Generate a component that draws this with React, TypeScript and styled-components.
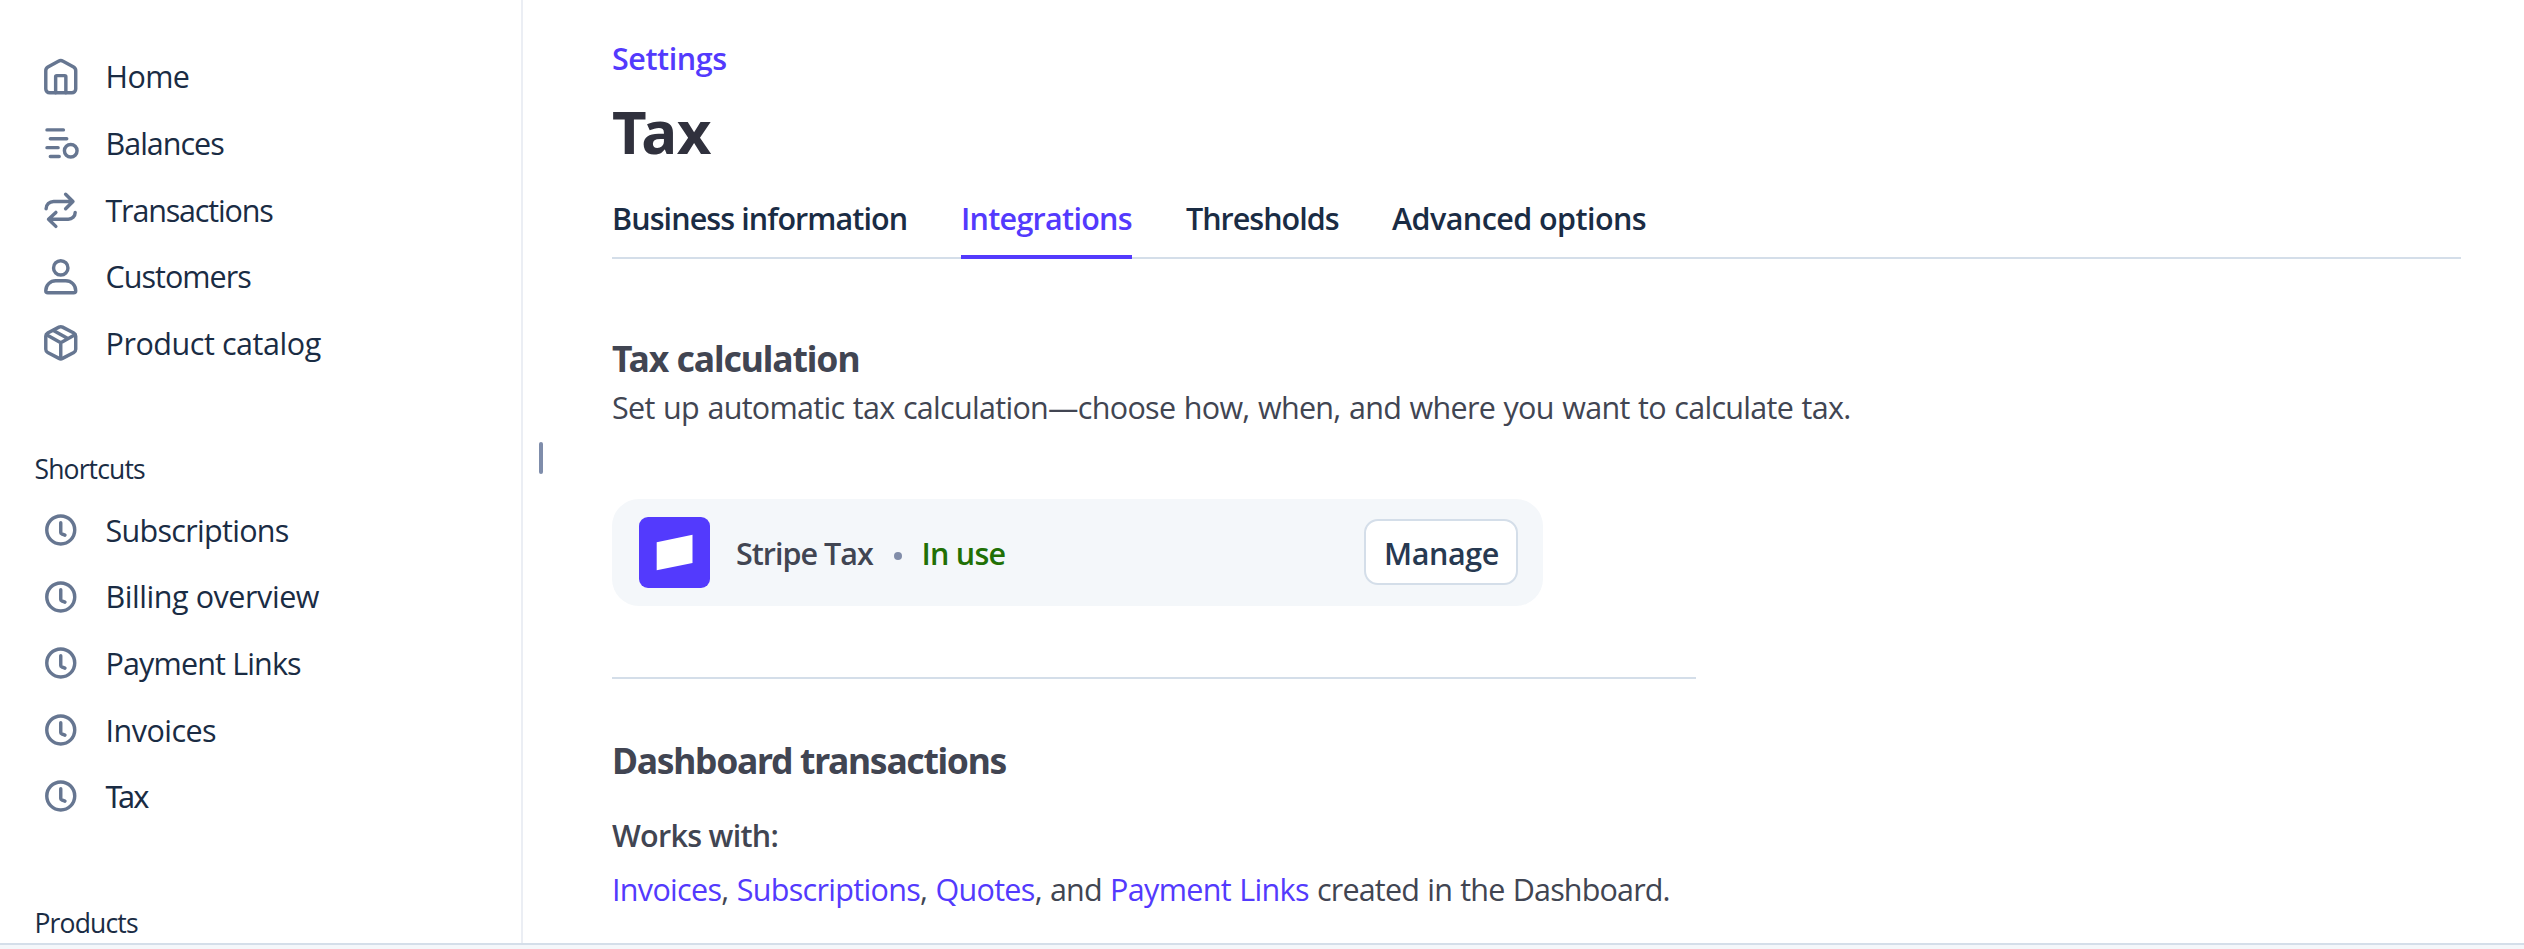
import React from "react";
import styled, { createGlobalStyle } from "styled-components";

const GlobalStyle = createGlobalStyle`
  * { box-sizing: border-box; }
  body {
    margin: 0;
    background: #fff;
    font-family: "Open Sans", "Noto Sans", sans-serif;
    font-size: 30.5px;
    color: #414552;
    overflow: hidden;
  }
`;

const Page = styled.div`
  display: flex;
  flex-direction: column;
  height: 949px;
  overflow: hidden;
`;

const Columns = styled.div`
  display: flex;
  height: 943px;
  overflow: hidden;
`;

const BottomBar = styled.footer`
  height: 6px;
  flex: none;
  background: #f4f7fa;
  border-top: 2px solid #d4dee9;
`;

const Sidebar = styled.aside`
  flex: none;
  width: 523px;
  padding-top: 43px;
  border-right: 2px solid #ebeef4;
  overflow: hidden;
`;

const NavGroup = styled.nav`
  display: flex;
  flex-direction: column;
`;

const NavItem = styled.a<{ $ls: number; $noto?: boolean }>`
  display: flex;
  align-items: center;
  gap: 27px;
  height: 66.67px;
  padding-left: 43px;
  color: #1a2c44;
  letter-spacing: ${(p) => p.$ls}px;
  font-family: ${(p) => (p.$noto ? '"Noto Sans"' : '"Open Sans"')}, sans-serif;
  white-space: nowrap;
`;

const NavIcon = styled.svg`
  flex: none;
  width: 35.5px;
  height: 35.5px;
  fill: none;
  stroke: #667691;
  stroke-width: 1.55;
  stroke-linecap: round;
  stroke-linejoin: round;
  overflow: visible;
`;

const NavHeading = styled.h2<{ $ls: number }>`
  margin: 75px 0 9px;
  padding-left: 34.5px;
  font-size: 26.5px;
  font-weight: 400;
  line-height: 36px;
  letter-spacing: ${(p) => p.$ls}px;
  color: #1a2c44;
`;

const ResizeHandle = styled.div`
  flex: none;
  align-self: flex-start;
  width: 4px;
  height: 32px;
  margin: 442px 0 0 16px;
  border-radius: 2px;
  background: #7f8dab;
`;

const Main = styled.main`
  flex: 1;
  padding: 38px 63px 0 69px;
`;

const Breadcrumb = styled.a`
  display: block;
  font-weight: 600;
  line-height: 40px;
  letter-spacing: -0.43px;
  color: #533afd;
`;

const Title = styled.h1`
  margin: 17px 0 31px;
  font-family: "Noto Sans", sans-serif;
  font-size: 60px;
  font-weight: 700;
  line-height: 72px;
  letter-spacing: -0.5px;
  color: #30313d;
`;

const Tabs = styled.div`
  display: flex;
  gap: 54px;
  height: 61px;
  border-bottom: 2px solid #d4dee9;
`;

const Tab = styled.a<{ $w: number; $ls: number; $active?: boolean }>`
  width: ${(p) => p.$w}px;
  height: 61px;
  font-weight: 600;
  line-height: 40px;
  white-space: nowrap;
  letter-spacing: ${(p) => p.$ls}px;
  color: ${(p) => (p.$active ? "#533afd" : "#1a2c44")};
  border-bottom: 4px solid ${(p) => (p.$active ? "#533afd" : "transparent")};
`;

const SectionTitle = styled.h2<{ $ls: number; $first?: boolean }>`
  margin: ${(p) => (p.$first ? 77 : 59)}px 0 0;
  font-family: "Noto Sans", sans-serif;
  font-size: 35.5px;
  font-weight: 700;
  line-height: 44px;
  letter-spacing: ${(p) => p.$ls}px;
`;

const Description = styled.p`
  margin: 7px 0 0;
  line-height: 40px;
  letter-spacing: -0.7px;
  word-spacing: 1.2px;
  white-space: nowrap;
`;

const Card = styled.div`
  display: flex;
  align-items: center;
  width: 931px;
  height: 107px;
  margin-top: 72px;
  padding: 0 25px 0 27px;
  border-radius: 27px;
  background: #f4f7fa;
  font-weight: 600;
`;

const AppTile = styled.svg`
  flex: none;
  width: 71px;
  height: 71px;
  margin-right: 26px;
`;

const AppName = styled.span`
  width: 137px;
  line-height: 40px;
  letter-spacing: -1px;
  white-space: nowrap;
`;

const Dot = styled.span`
  width: 8px;
  height: 8px;
  margin: 7px 20px 0 20.5px;
  border-radius: 50%;
  background: #818da9;
`;

const Status = styled.span`
  line-height: 40px;
  letter-spacing: -0.75px;
  color: #217005;
`;

const ManageButton = styled.button`
  width: 154px;
  height: 66px;
  margin: 0 0 1px auto;
  padding: 2px 0 0 1px;
  border: 2px solid #d4dee9;
  border-radius: 14px;
  background: #fff;
  font: inherit;
  line-height: 40px;
  letter-spacing: -0.4px;
  color: #273951;
`;

const Rule = styled.hr`
  width: 1084px;
  height: 2px;
  margin: 71px 0 0;
  border: 0;
  background: #d4dee9;
`;

const WorksWith = styled.h3`
  margin: 33px 0 14px;
  font-size: inherit;
  font-weight: 600;
  line-height: 40px;
  letter-spacing: -0.72px;
`;

const Products = styled.p`
  margin: 0;
  line-height: 40px;
  letter-spacing: -0.84px;
  word-spacing: 1.2px;
  white-space: nowrap;
`;

const Link = styled.a`
  letter-spacing: -0.68px;
  color: #533afd;
`;

const icons = {
  home: (
    <>
      <path d="M1.25 5.3c0-.7.35-1.3.95-1.65L6.95.98c.65-.35 1.45-.35 2.1 0l4.75 2.67c.6.35.95.95.95 1.65v8.2c0 .97-.78 1.75-1.75 1.75H3c-.97 0-1.75-.78-1.75-1.75z" />
      <path d="M5.7 15.2V8c0-.3.2-.5.5-.5h3.6c.3 0 .5.2.5.5v7.2" />
    </>
  ),
  balances: (
    <>
      <path d="M1.8 2.2h7.4M3.3 6.2h7.4M1.8 10.2h5M3.3 14.2h4" />
      <circle cx="12.5" cy="11.6" r="2.85" />
    </>
  ),
  transactions: (
    <>
      <path d="M1.4 7.6c0-1.9 1.5-3.35 3.4-3.35h8.7M10.2 1l3.3 3.25-3.3 3.3" />
      <path d="M14.5 9.2c0 1.7-1.4 3.05-3.1 3.05H2.5M5.8 9.2l-3.3 3.05L5.8 15.5" />
    </>
  ),
  customers: (
    <>
      <circle cx="8" cy="4" r="3.25" />
      <path d="M1.25 14.3c0-2.5 2-4.5 4.5-4.5h4.5c2.5 0 4.5 2 4.5 4.5 0 .55-.4.95-.95.95H2.2c-.55 0-.95-.4-.95-.95z" />
    </>
  ),
  catalog: (
    <>
      <path d="M7.2.95c.5-.25 1.1-.25 1.6 0l5.1 2.7c.55.3.85.8.85 1.4v5.9c0 .6-.3 1.1-.85 1.4l-5.1 2.7c-.5.25-1.1.25-1.6 0l-5.1-2.7c-.55-.3-.85-.8-.85-1.4v-5.9c0-.6.3-1.1.85-1.4z" />
      <path d="M1.6 4.4L8 8l6.4-3.6M8 8v7.2M4.7 2.5l6.5 3.6" />
    </>
  ),
  clock: (
    <>
      <circle cx="8" cy="8.1" r="6.3" />
      <path d="M8 4.8v4.4c0 .3.15.5.4.62l1.5.6" />
    </>
  ),
};

type Item = { label: string; icon: keyof typeof icons; ls: number; noto?: boolean };

const primary: Item[] = [
  { label: "Home", icon: "home", ls: -0.6 },
  { label: "Balances", icon: "balances", ls: -1.01 },
  { label: "Transactions", icon: "transactions", ls: -1.18 },
  { label: "Customers", icon: "customers", ls: -0.98 },
  { label: "Product catalog", icon: "catalog", ls: -0.44 },
];

const shortcuts: Item[] = [
  { label: "Subscriptions", icon: "clock", ls: -0.7 },
  { label: "Billing overview", icon: "clock", ls: -0.44 },
  { label: "Payment Links", icon: "clock", ls: -0.85 },
  { label: "Invoices", icon: "clock", ls: -0.52 },
  { label: "Tax", icon: "clock", ls: -1.9, noto: true },
];

const NavList = ({ items }: { items: Item[] }) => (
  <NavGroup>
    {items.map((it) => (
      <NavItem key={it.label} $ls={it.ls} $noto={it.noto}>
        <NavIcon viewBox="0 0 16 16">{icons[it.icon]}</NavIcon>
        <span>{it.label}</span>
      </NavItem>
    ))}
  </NavGroup>
);

export default function App() {
  return (
    <Page>
      <GlobalStyle />
      <Columns>
        <Sidebar>
          <NavList items={primary} />
          <NavHeading $ls={-0.86}>Shortcuts</NavHeading>
          <NavList items={shortcuts} />
          <NavHeading $ls={-0.84}>Products</NavHeading>
        </Sidebar>
        <ResizeHandle />
        <Main>
          <Breadcrumb>Settings</Breadcrumb>
          <Title>Tax</Title>
          <Tabs>
            <Tab $w={295} $ls={-0.91}>Business information</Tab>
            <Tab $w={171} $ls={-0.72} $active>Integrations</Tab>
            <Tab $w={152} $ls={-1.0}>Thresholds</Tab>
            <Tab $w={255} $ls={-0.57}>Advanced options</Tab>
          </Tabs>
          <SectionTitle $first $ls={-1.06}>Tax calculation</SectionTitle>
          <Description>
            Set up automatic tax calculation—choose how, when, and where you want to calculate tax.
          </Description>
          <Card>
            <AppTile viewBox="0 0 71 71">
              <rect width="71" height="71" rx="9" fill="#533afd" />
              <path d="M17.7 25.3L53.5 17.7V46L17.7 53.3z" fill="#fff" />
            </AppTile>
            <AppName>Stripe Tax</AppName>
            <Dot />
            <Status>In use</Status>
            <ManageButton>Manage</ManageButton>
          </Card>
          <Rule />
          <SectionTitle $ls={-1.28}>Dashboard transactions</SectionTitle>
          <WorksWith>Works with:</WorksWith>
          <Products>
            <Link>Invoices</Link>, <Link>Subscriptions</Link>, <Link>Quotes</Link>, and{" "}
            <Link>Payment Links</Link> created in the Dashboard.
          </Products>
        </Main>
      </Columns>
      <BottomBar />
    </Page>
  );
}
